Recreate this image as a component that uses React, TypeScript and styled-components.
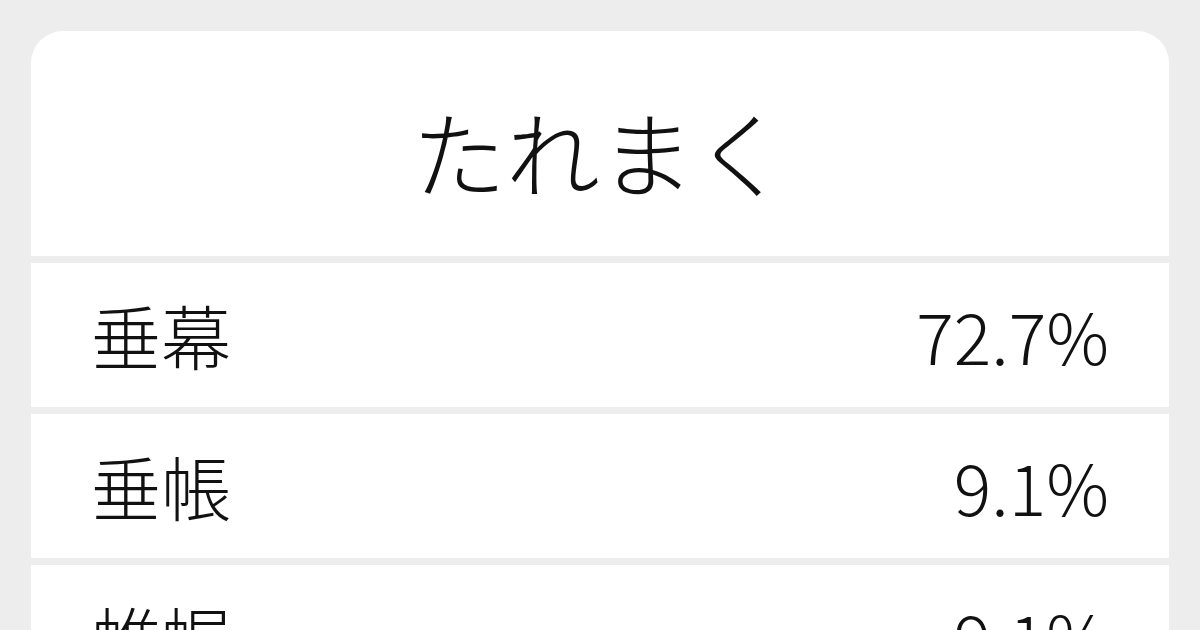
import styled, { createGlobalStyle } from 'styled-components';

const GlobalStyle = createGlobalStyle`
  html, body {
    margin: 0;
    padding: 0;
    background: #ededed;
  }
  body {
    font-family: "Noto Sans CJK JP", "Noto Sans", sans-serif;
    color: #111;
  }
`;

const Page = styled.div`
  width: 1200px;
  height: 630px;
  overflow: hidden;
  padding: 31px 31px 0;
  box-sizing: border-box;
`;

const Card = styled.div`
  display: flex;
  flex-direction: column;
  gap: 7px;
  border-radius: 32px 32px 0 0;
  overflow: hidden;
  background: #ededed;
`;

const Title = styled.div`
  height: 225px;
  display: flex;
  align-items: center;
  justify-content: center;
  background: #fff;
  font-size: 94px;
  font-weight: 300;
  line-height: 1;
  padding-top: 12px;
  box-sizing: border-box;
`;

const Row = styled.div`
  height: 144px;
  flex-shrink: 0;
  display: flex;
  align-items: center;
  justify-content: space-between;
  padding: 0 60px 0 60px;
  background: #fff;
  font-size: 70px;
  font-weight: 300;
  line-height: 1;
`;

const Word = styled.span``;

const Ratio = styled.span``;

const results = [
  { word: '垂幕', ratio: '72.7%' },
  { word: '垂帳', ratio: '9.1%' },
  { word: '帷幄', ratio: '9.1%' },
];

const App = (): JSX.Element => {
  return (
    <>
      <GlobalStyle />
      <Page>
        <Card>
          <Title>たれまく</Title>
          {results.map((r) => (
            <Row key={r.word}>
              <Word>{r.word}</Word>
              <Ratio>{r.ratio}</Ratio>
            </Row>
          ))}
        </Card>
      </Page>
    </>
  );
};

export default App;
